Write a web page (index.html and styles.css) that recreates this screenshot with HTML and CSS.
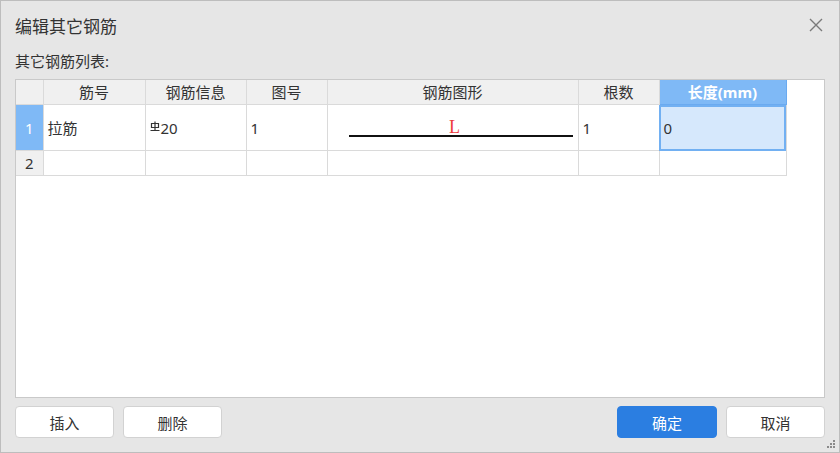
FILE: index.html
```html
<!DOCTYPE html>
<html lang="zh-CN">
<head>
<meta charset="UTF-8" />
<title>编辑其它钢筋</title>
<link rel="stylesheet" href="styles.css">
</head>
<body>
<div class="dialog">
  <div class="titlebar">
    <div class="title">编辑其它钢筋</div>
    <div class="close">
      <svg width="14" height="14" viewBox="0 0 14 14"><path d="M1 1L13 13M13 1L1 13" stroke="#7a7a7a" stroke-width="1.4" fill="none"/></svg>
    </div>
  </div>
  <div class="label">其它钢筋列表:</div>
  <div class="panel">
    <table class="grid">
      <colgroup>
        <col class="c-idx"><col class="c-no"><col class="c-info"><col class="c-fig">
        <col class="c-shape"><col class="c-count"><col class="c-len">
      </colgroup>
      <thead>
        <tr>
          <th></th>
          <th>筋号</th>
          <th>钢筋信息</th>
          <th>图号</th>
          <th>钢筋图形</th>
          <th>根数</th>
          <th class="sel">长度(mm)</th>
        </tr>
      </thead>
      <tbody>
        <tr class="row1">
          <td class="idx sel">1</td>
          <td>拉筋</td>
          <td class="info"><svg class="grade" width="10" height="11" viewBox="0 0 10 11"><path d="M1.5 2.5H8.5V6.5H1.5Z M5 0.5V10 M0.5 9.5H9.5" stroke="#333" stroke-width="1.2" fill="none"/></svg>20</td>
          <td>1</td>
          <td class="shape">
            <div class="shape-box">
              <span class="shape-l">L</span>
              <div class="bar"></div>
            </div>
          </td>
          <td>1</td>
          <td class="active">0</td>
        </tr>
        <tr class="row2">
          <td class="idx">2</td>
          <td></td><td></td><td></td><td></td><td></td><td></td>
        </tr>
      </tbody>
    </table>
  </div>
  <div class="footer">
    <div class="left">
      <button class="btn">插入</button>
      <button class="btn">删除</button>
    </div>
    <div class="right">
      <button class="btn primary">确定</button>
      <button class="btn">取消</button>
    </div>
  </div>
  <svg class="grip" width="10" height="10" viewBox="0 0 10 10">
    <rect x="7" y="1" width="2" height="2" fill="#8a8a8a"/>
    <rect x="4" y="4" width="2" height="2" fill="#8a8a8a"/>
    <rect x="7" y="4" width="2" height="2" fill="#8a8a8a"/>
    <rect x="1" y="7" width="2" height="2" fill="#8a8a8a"/>
    <rect x="4" y="7" width="2" height="2" fill="#8a8a8a"/>
    <rect x="7" y="7" width="2" height="2" fill="#8a8a8a"/>
  </svg>
</div>
</body>
</html>
```

FILE: styles.css
```css
body {
  margin: 0;
  font-family: "Noto Sans", "Noto Sans CJK SC", sans-serif;
  color: #333;
}
.dialog {
  position: relative;
  box-sizing: border-box;
  width: 840px;
  height: 453px;
  background-color: #e6e6e6;
  border: 1px solid #bdbdbd;
  display: flex;
  flex-direction: column;
}
.titlebar {
  height: 48px;
  display: flex;
  align-items: center;
  justify-content: space-between;
  padding: 0 16px 0 14px;
}
.title {
  font-size: 17px;
  color: #333;
}
.close {
  display: flex;
  align-items: center;
}
.label {
  font-size: 15px;
  line-height: 24px;
  padding-left: 14px;
  color: #333;
}
.panel {
  margin: 6px 14px 0 14px;
  height: 319px;
  box-sizing: border-box;
  background-color: white;
  border: 1px solid #c9c9c9;
}
.grid {
  border-collapse: collapse;
  table-layout: fixed;
  width: 770px;
  font-size: 15px;
}
.c-idx { width: 27px; }
.c-no { width: 102px; }
.c-info { width: 101px; }
.c-fig { width: 81px; }
.c-shape { width: 251px; }
.c-count { width: 81px; }
.c-len { width: 127px; }
.grid th,
.grid td {
  border-right: 1px solid #dadada;
  border-bottom: 1px solid #dadada;
  padding: 0 4px;
  white-space: nowrap;
  line-height: 20px;
}
.grid th {
  height: 24px;
  background-color: #f0f0f0;
  font-weight: normal;
  text-align: center;
  color: #333;
  padding: 0;
}
.grid th.sel {
  background-color: #7fb9f6;
  color: white;
  font-weight: bold;
  border-color: #6aaaf0;
}
.row1 td {
  height: 45px;
}
.row2 td {
  height: 24px;
}
.grid td.idx {
  background-color: #f0f0f0;
  text-align: center;
  padding: 0;
}
.grid td.idx.sel {
  background-color: #7fb9f6;
  color: white;
}
.info {
  padding-bottom: 4px;
}
.grade {
  vertical-align: 2px;
  margin-right: 1px;
}
.grid td.active {
  background-color: #d6e8fc;
  outline: 2px solid #72b0f2;
  outline-offset: -2px;
  padding-left: 4px;
}
.grid td.shape {
  padding: 0;
  vertical-align: top;
}
.shape-box {
  display: flex;
  flex-direction: column;
  align-items: center;
  padding: 15px 4px 0 21px;
}
.shape-l {
  font-family: "Liberation Serif", serif;
  font-size: 18px;
  line-height: 14px;
  color: #ee3b3b;
  margin-right: 13px;
}
.bar {
  width: 224px;
  height: 2px;
  background-color: #111;
  margin-top: 1px;
}
.footer {
  display: flex;
  justify-content: space-between;
  padding: 8px 14px 0 14px;
}
.left,
.right {
  display: flex;
  gap: 9px;
}
.btn {
  width: 99px;
  height: 32px;
  background-color: white;
  border: 1px solid #d2d2d2;
  border-radius: 4px;
  font-family: "Noto Sans", "Noto Sans CJK SC", sans-serif;
  font-size: 15px;
  color: #333;
}
.btn.primary {
  width: 100px;
  background-color: #2b7ee1;
  border-color: #2b7ee1;
  color: white;
}
.grip {
  position: absolute;
  right: 3px;
  bottom: 3px;
}
```
